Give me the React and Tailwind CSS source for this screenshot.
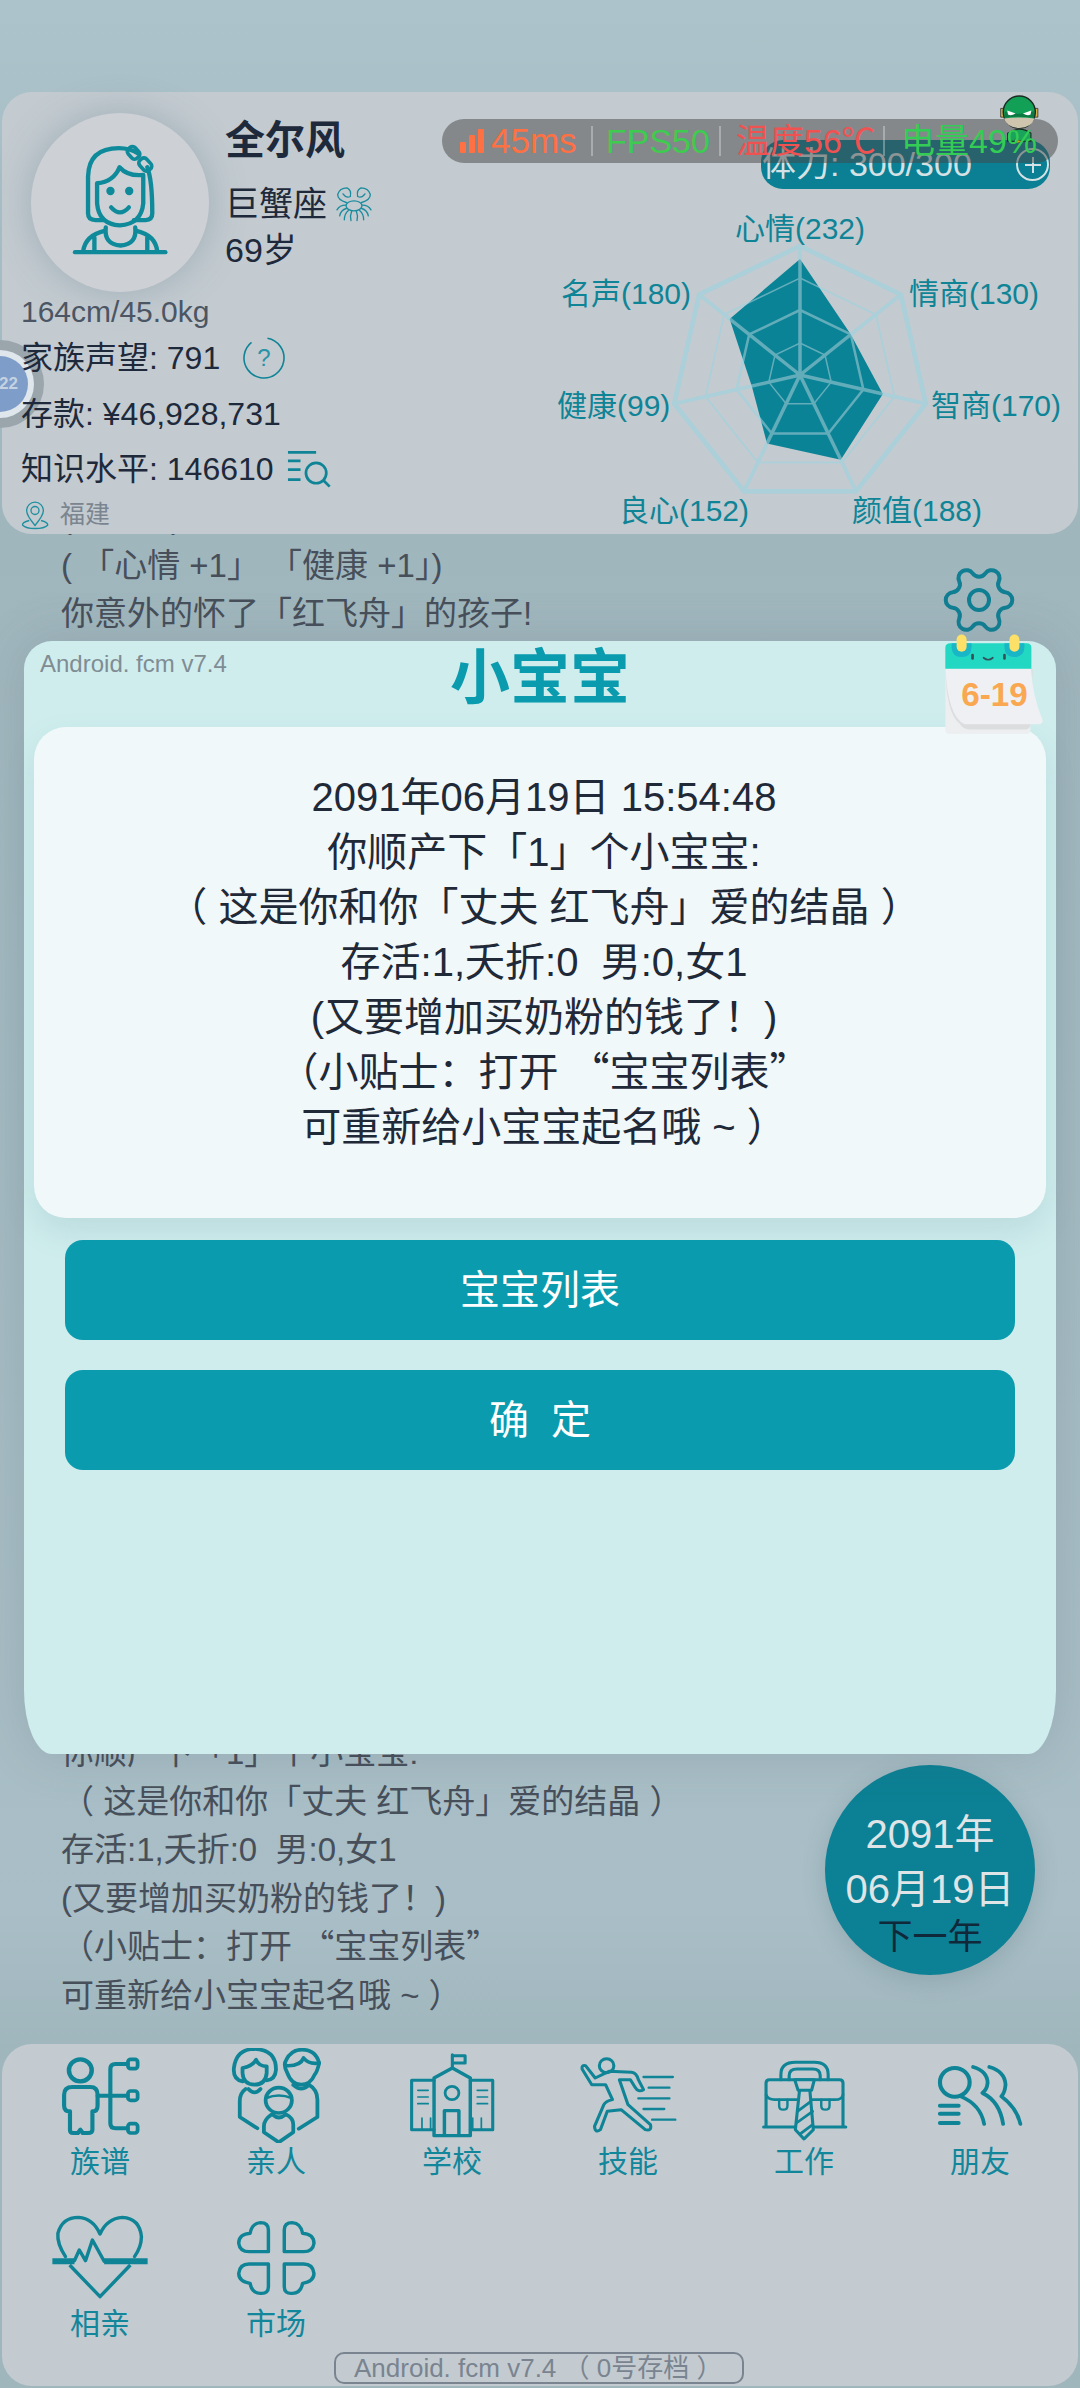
import { Settings } from 'lucide-react';

const TEAL = '#0f8496';
const PANEL = '#c3cbd0';

// 雷达图: 顺时针, 从「心情」开始
const STATS = [232, 130, 170, 188, 152, 99, 180];
const CX = 800;
const CY = 375;

function ring(r) {
  return STATS.map((_, i) => {
    const a = (i * 2 * Math.PI) / 7;
    return `${CX + r * Math.sin(a)},${CY - r * Math.cos(a)}`;
  }).join(' ');
}

function valuePoints() {
  return STATS.map((v, i) => {
    const a = (i * 2 * Math.PI) / 7;
    return `${CX + (v / 2) * Math.sin(a)},${CY - (v / 2) * Math.cos(a)}`;
  }).join(' ');
}

function RadarGrid({ opacity }) {
  const grid = '#abd0da';
  return (
    <g fill="none" stroke={grid} opacity={opacity}>
      <polygon points={ring(129)} strokeWidth="4.5" />
      <polygon points={ring(97)} strokeWidth="1.5" />
      <polygon points={ring(65)} strokeWidth="2.5" />
      <polygon points={ring(32)} strokeWidth="1.5" />
      {STATS.map((_, i) => {
        const a = (i * 2 * Math.PI) / 7;
        return <line key={i} x1={CX} y1={CY} x2={CX + 129 * Math.sin(a)} y2={CY - 129 * Math.cos(a)} strokeWidth="3.5" />;
      })}
    </g>
  );
}

function Radar() {
  const labels = [
    ['心情(232)', 735, 228],
    ['情商(130)', 909, 293],
    ['智商(170)', 931, 405],
    ['颜值(188)', 852, 510],
    ['良心(152)', 619, 510],
    ['健康(99)', 557, 405],
    ['名声(180)', 561, 293],
  ];
  return (
    <svg viewBox="540 195 538 339" className="block w-[538px] h-[339px]">
      <RadarGrid opacity={1} />
      <polygon points={valuePoints()} fill="#0b8396" />
      <RadarGrid opacity={0.55} />
      {labels.map(([t, x, y]) => (
        <text key={t} x={x} y={y + 11} fontSize="30" fill={TEAL}>{t}</text>
      ))}
    </svg>
  );
}

function Avatar() {
  return (
    <svg viewBox="90 100 517 535" className="w-[178px] h-[179px]" fill="none" stroke="#0f8a9a" strokeWidth="13" strokeLinecap="round" strokeLinejoin="round">
      <path d="M300 420H275Q253 420 253 400V290Q255 205 345 205Q378 205 405 222M430 262Q445 300 445 400Q445 420 425 420H390" />
      <path d="M280 310V370Q285 432 348 436Q412 432 418 370V285Q372 290 347 262Q330 305 280 310Z" />
      <circle cx="320" cy="333" r="6" fill="#0f8a9a" />
      <circle cx="376" cy="333" r="6" fill="#0f8a9a" />
      <path d="M322 382Q348 412 375 382" />
      <rect x="370" y="205" width="38" height="28" rx="11" transform="rotate(48 389 219)" strokeWidth="11" />
      <rect x="404" y="240" width="40" height="28" rx="11" transform="rotate(48 424 254)" strokeWidth="11" />
      <path d="M306 442Q300 492 350 496Q400 492 394 442" />
      <path d="M238 514Q245 465 302 452M460 514Q455 465 398 452M272 514V472M430 514V472" />
      <path d="M214 516H484" strokeWidth="13" />
    </svg>
  );
}

function Crab() {
  return (
    <svg viewBox="980 315 114 110" className="w-[38px] h-[37px]" fill="none" stroke="#1a8c9d" strokeWidth="4" strokeLinecap="round">
      <ellipse cx="1037" cy="374" rx="24" ry="15" />
      <path d="M1014 364Q988 356 988 340Q994 320 1016 320Q1030 326 1026 346Q1014 352 1004 338" />
      <path d="M1060 364Q1086 356 1086 340Q1080 320 1058 320Q1044 326 1048 346Q1060 352 1070 338" />
      <path d="M1012 372Q994 372 986 386M1014 382Q998 386 994 404M1020 388Q1008 398 1008 416M1030 390Q1024 404 1028 418" />
      <path d="M1062 372Q1080 372 1088 386M1060 382Q1076 386 1080 404M1054 388Q1066 398 1066 416M1044 390Q1050 404 1046 418" />
    </svg>
  );
}

function QuestionRing() {
  return (
    <svg viewBox="0 0 44 44" className="w-[44px] h-[44px]">
      <circle cx="22" cy="22" r="20" fill="none" stroke={TEAL} strokeWidth="1.6" strokeDasharray="108 18" transform="rotate(-80 22 22)" />
      <text x="22" y="30" textAnchor="middle" fontSize="24" fill="#2a93a5">?</text>
    </svg>
  );
}

function SearchList() {
  return (
    <svg viewBox="830 1108 134 112" className="w-[46px] h-[38px]" fill="none" stroke={TEAL} strokeWidth="8">
      <path d="M835 1115H918M835 1140H872M835 1166H872M835 1195H872" />
      <circle cx="918" cy="1176" r="30" />
      <path d="M940 1198L958 1216" />
    </svg>
  );
}

function Pin() {
  return (
    <svg viewBox="60 1260 84 86" className="w-[28px] h-[29px]" fill="none" stroke="#1f8fa0" strokeWidth="4">
      <path d="M102 1333Q76 1302 77 1288A25 25 0 0 1 127 1288Q128 1302 102 1333Z" />
      <circle cx="102" cy="1288" r="12" />
      <path d="M85 1318Q62 1324 65 1332Q75 1342 102 1342Q130 1342 140 1332Q142 1324 120 1318" />
    </svg>
  );
}

function Hero() {
  return (
    <svg viewBox="120 35 120 140" className="w-[44px] h-[51px]">
      <path d="M127 80h12v24h-12zM217 80h12v24h-12z" fill="#d9b24c" stroke="#222" strokeWidth="2" />
      <path d="M146 148Q178 126 210 148V170H146Z" fill="#1aa35a" stroke="#1b2a22" strokeWidth="3" />
      <circle cx="178" cy="90" r="44" fill="#12a056" stroke="#1b2a22" strokeWidth="4" />
      <path d="M136 108Q178 102 220 108Q212 133 178 134Q144 133 136 108Z" fill="#cfc4ae" />
      <path d="M138 88Q178 102 218 88L219 106Q178 100 137 106Z" fill="#0c7a42" />
      <path d="M145 86L168 94Q155 102 147 97ZM211 86L188 94Q201 102 209 97Z" fill="#fff" />
      <path d="M166 164l18 6-16 8z" fill="#e8a020" stroke="#222" strokeWidth="1" />
    </svg>
  );
}

function PerfBar() {
  return (
    <div className="absolute left-[440px] top-[27px] w-[616px] h-[44px] rounded-full bg-[rgba(70,70,70,0.5)] flex items-center pl-[18px] text-[34px] whitespace-nowrap">
      <div className="absolute left-[556px] top-[-27px]"><Hero /></div>
      <svg viewBox="0 0 25 24" className="relative w-[25px] h-[24px] mr-[6px]" fill="#ff7043">
        <rect x="0" y="13" width="6" height="11" rx="1" />
        <rect x="9" y="6" width="6" height="18" rx="1" />
        <rect x="18" y="0" width="6" height="24" rx="1" />
      </svg>
      <span className="relative w-[88px] text-[#ff7043] text-[35px]">45ms</span>
      <span className="relative ml-[12px] mr-[13px] w-[2px] h-[30px] bg-white/30" />
      <span className="relative w-[100px] text-[#3ecb50]">FPS50</span>
      <span className="relative ml-[13px] mr-[15px] w-[2px] h-[30px] bg-white/30" />
      <span className="relative w-[134px] text-[#f05252]">温度56℃</span>
      <span className="relative ml-[13px] mr-[16px] w-[2px] h-[30px] bg-white/30" />
      <span className="relative text-[#33cc55]">电量49%</span>
    </div>
  );
}

function TopPanel() {
  return (
    <div className="relative z-10 mt-[92px] mx-[2px] h-[442px] rounded-[30px] bg-[#c3cbd0] flex">
      {/* 悬浮球 */}
      <div className="absolute left-[-46px] top-[248px] w-[88px] h-[88px] rounded-full bg-[#9aa6ac] flex items-center justify-center">
        <div className="w-[68px] h-[68px] rounded-full bg-[#dfe7ec] flex items-center justify-center">
          <div className="w-[56px] h-[56px] rounded-full bg-[#7f9dc9] flex items-center justify-end pr-[10px] text-[17px] font-bold text-[#c4d2e2]">22</div>
        </div>
      </div>

      <div className="relative w-[538px] flex flex-col text-[32px] text-[#1e293b]">
        <div className="flex pl-[29px] pt-[21px]">
          <div className="w-[178px] h-[179px] rounded-full bg-[#cdd1d6] shadow-[0_0_36px_rgba(90,115,135,0.35)]">
            <Avatar />
          </div>
          <div className="ml-[16px]">
            <div className="h-[54px] flex items-center text-[40px] font-bold">全尔风</div>
            <div className="mt-[15px] h-[44px] flex items-center text-[34px]">巨蟹座<span className="ml-[8px]"><Crab /></span></div>
            <div className="mt-[2px] h-[44px] flex items-center text-[34px]">69岁</div>
          </div>
        </div>
        <div className="pl-[19px]">
          <div className="h-[38px] flex items-center text-[30px] text-[#4b5563]">164cm/45.0kg</div>
          <div className="h-[56px] flex items-center">家族声望: 791<span className="ml-[22px]"><QuestionRing /></span></div>
          <div className="h-[55px] flex items-center">存款: ¥46,928,731</div>
          <div className="h-[55px] flex items-center">知识水平: 146610<span className="ml-[12px]"><SearchList /></span></div>
          <div className="h-[38px] flex items-center text-[25px] text-[#7b8590]"><Pin /><span className="ml-[11px]">福建</span></div>
        </div>
      </div>

      <div className="w-[538px] flex flex-col items-end">
        <div className="mt-[48px] mr-[28px] w-[289px] h-[49px] rounded-[22px] bg-[#0b7f93] flex items-center justify-between pl-[1px] pr-[1px] text-[34px] text-[#d5e2e5]">
          <span>体力: 300/300</span>
          <span className="w-[33px] h-[33px] rounded-full border-2 border-[#d5e2e5] flex items-center justify-center">
            <svg viewBox="0 0 20 20" className="w-[20px] h-[20px]" stroke="#d5e2e5" strokeWidth="2"><path d="M10 2V18M2 10H18" /></svg>
          </span>
        </div>
        <div className="mt-[6px]"><Radar /></div>
      </div>

      <PerfBar />
    </div>
  );
}

function Calendar() {
  return (
    <svg viewBox="190 275 310 315" className="w-[103px] h-[105px]">
      <path d="M197 385V570Q197 581 210 581H440Q453 581 453 570V385Z" fill="#eceef0" />
      <path d="M197 385Q200 520 240 550Q250 568 270 568H440Q453 565 453 553L460 385Z" fill="#dcdddf" />
      <path d="M197 385H455Q460 470 490 540Q490 552 478 552H255Q205 530 197 385Z" fill="#eef0f4" />
      <path d="M197 385V322Q197 308 212 308H442Q456 308 456 322V385Z" fill="#22d8c2" />
      <path d="M216 308V322Q218 350 246 350Q274 350 276 322V308Z" fill="#19b6c8" />
      <path d="M375 308V322Q377 350 405 350Q433 350 435 322V308H375Z" fill="#19b6c8" />
      <rect x="231" y="282" width="30" height="52" rx="15" fill="#fde068" />
      <rect x="390" y="282" width="30" height="52" rx="15" fill="#fde068" />
      <rect x="275" y="340" width="8" height="18" rx="4" fill="#35505a" />
      <rect x="371" y="340" width="8" height="18" rx="4" fill="#35505a" />
      <path d="M312 352Q326 364 340 352" fill="none" stroke="#35505a" strokeWidth="5" strokeLinecap="round" />
      <text x="345" y="498" textAnchor="middle" fontSize="100" fontWeight="700" fill="#f9a851">6-19</text>
    </svg>
  );
}

// 弯引号要用中文字形(全角), Liberation 里的太窄
function Quoted({ children }) {
  return (
    <>
      <span className="leading-none font-['Noto_Sans_CJK_SC']">“</span>
      {children}
      <span className="leading-none font-['Noto_Sans_CJK_SC']">”</span>
    </>
  );
}

function Dialog() {
  return (
    <div className="absolute z-30 left-[24px] top-[641px] w-[1032px] h-[1113px] bg-[#cfeded] rounded-t-[28px] rounded-b-[28px_64px] shadow-[0_0_50px_rgba(70,90,100,0.18)] flex flex-col">
      <div className="relative h-[86px] pb-[10px] flex items-center justify-center">
        <span className="absolute left-[16px] top-[5px] text-[24px] text-[#7f8c94]">Android. fcm v7.4</span>
        <span className="text-[60px] font-bold text-[#0a9bae]">小宝宝</span>
      </div>
      <div className="mx-[10px] h-[491px] pt-[43px] pl-[8px] rounded-[32px] bg-[#f0f8fa] shadow-[0_14px_30px_rgba(90,130,140,0.16)] text-center text-[40px] leading-[55px] text-[#1f2937] whitespace-pre">
        <div>2091年06月19日 15:54:48</div>
        <div>你顺产下「1」个小宝宝:</div>
        <div>（ 这是你和你「丈夫 红飞舟」爱的结晶 ）</div>
        <div>存活:1,夭折:0  男:0,女1</div>
        <div>(又要增加买奶粉的钱了！)</div>
        <div>（小贴士：打开 <Quoted>宝宝列表</Quoted></div>
        <div>可重新给小宝宝起名哦 ~ ）</div>
      </div>
      <button className="mx-[41px] mt-[22px] h-[100px] rounded-[18px] bg-[#0a9bae] text-[40px] text-white">宝宝列表</button>
      <button className="mx-[41px] mt-[30px] h-[100px] rounded-[18px] bg-[#0a9bae] text-[40px] text-white whitespace-pre">确  定</button>
    </div>
  );
}

function Log() {
  return (
    <div className="relative flex-1 -mt-[41px] pl-[61px] pb-[24px] flex flex-col justify-between text-[33px] leading-[48.5px] text-[#474f5a] whitespace-pre">
      <div>
        <div>(「心情」)</div>
        <div>( 「心情 +1」 「健康 +1」)</div>
        <div>你意外的怀了「红飞舟」的孩子!</div>
      </div>
      <div>
        <div>你顺产下「1」个小宝宝:</div>
        <div>（ 这是你和你「丈夫 红飞舟」爱的结晶 ）</div>
        <div>存活:1,夭折:0  男:0,女1</div>
        <div>(又要增加买奶粉的钱了！)</div>
        <div>（小贴士：打开 <Quoted>宝宝列表</Quoted></div>
        <div>可重新给小宝宝起名哦 ~ ）</div>
      </div>

      <div className="absolute left-[825px] bottom-[69px] w-[210px] h-[210px] rounded-full bg-[#0c8094] shadow-[0_6px_24px_rgba(60,90,100,0.2)] flex flex-col items-center pt-[43px] leading-[52px]">
        <span className="text-[40px] text-[#dfe4e7]">2091年</span>
        <span className="text-[40px] text-[#dfe4e7] mt-[3px]">06月19日</span>
        <span className="text-[35px] text-[#10293a] -mt-[4px]">下一年</span>
      </div>
    </div>
  );
}

/* 底部菜单图标, 路径坐标直接取自放大后的截图 */
function MenuIcon({ x, row, children }) {
  const vy = row === 0 ? 55 : 540;
  return (
    <svg viewBox={`${x - 255} ${vy} 510 285`} preserveAspectRatio="none" className="w-[176px] h-[95px]" fill="none" stroke={TEAL} strokeWidth="11" strokeLinecap="round" strokeLinejoin="round">
      {children}
    </svg>
  );
}

const MENU = [
  {
    label: '族谱',
    x: 290,
    row: 0,
    icon: (
      <>
        <circle cx="233" cy="122" r="33" strokeWidth="13" />
        <path d="M210 172H262Q283 172 283 195V228Q283 245 268 245V300Q268 310 255 310H240L233 300L226 310H212Q203 310 203 300V245Q186 245 186 228V195Q186 172 210 172Z" strokeWidth="12" />
        <path d="M283 198H370M370 103H335Q320 103 320 118V281Q320 296 335 296H370" strokeWidth="12" />
        <rect x="371" y="89" width="28" height="28" rx="8" strokeWidth="11" />
        <rect x="371" y="184" width="28" height="28" rx="8" strokeWidth="11" />
        <rect x="371" y="282" width="28" height="28" rx="8" strokeWidth="11" />
      </>
    ),
  },
  {
    label: '亲人',
    x: 800,
    row: 0,
    icon: (
      <>
        <path d="M703 155Q675 150 678 115Q685 58 738 58Q800 60 800 120Q798 150 773 152" />
        <path d="M703 115V130Q705 165 738 165Q770 165 773 130V110Q750 110 742 90Q735 108 703 115Z" />
        <path d="M832 128Q820 105 830 90Q845 60 875 60Q915 60 925 100Q920 125 912 135Q900 165 873 165Q845 165 832 128Z" />
        <path d="M830 108Q870 110 880 85Q895 105 925 100" />
        <path d="M720 178Q738 198 755 178M850 166Q873 188 895 166" />
        <path d="M712 178Q695 190 695 215V262L746 296M895 165Q920 180 920 210V262L866 297" />
        <circle cx="808" cy="212" r="38" />
        <path d="M772 205Q808 190 845 205" strokeWidth="8" />
        <path d="M786 255Q765 270 765 290V308L808 338L850 308V285Q850 265 830 255M790 255Q808 272 828 255" />
      </>
    ),
  },
  {
    label: '学校',
    x: 1312,
    row: 0,
    icon: (
      <>
        <path d="M1313 115V75M1313 78H1350V100H1313" strokeWidth="9" />
        <path d="M1260 318V145L1313 115L1365 145V318Z" strokeWidth="10" />
        <circle cx="1312" cy="190" r="20" strokeWidth="8" />
        <path d="M1290 316V243H1332V316" strokeWidth="10" />
        <path d="M1260 152H1195V300H1260M1365 152H1430V300H1365" strokeWidth="9" />
        <path d="M1213 182H1243M1213 202H1243M1213 222H1243M1385 182H1415M1385 202H1415M1385 222H1415M1225 265V300M1250 265V300M1372 265V300M1397 265V300" strokeWidth="5" />
      </>
    ),
  },
  {
    label: '技能',
    x: 255,
    row: 0,
    icon: (
      <>
        <circle cx="193" cy="108" r="21" strokeWidth="9" />
        <path d="M122 118Q120 105 132 108L160 145L200 125L265 128Q280 130 285 150L300 180Q285 190 275 172L262 150H230L255 225L320 285Q325 305 305 300L235 240L195 245L175 300Q160 312 158 290L185 225Q190 215 210 210L190 165H150Z" strokeWidth="9" />
        <path d="M300 142H385M315 174H375M285 206H375M300 238H360M325 270H392" strokeWidth="7" />
      </>
    ),
  },
  {
    label: '工作',
    x: 765,
    row: 0,
    icon: (
      <>
        <path d="M655 290V160Q655 150 665 150H868Q878 150 878 160V290" strokeWidth="9" />
        <path d="M648 292H886" strokeWidth="9" />
        <path d="M698 150V135Q698 98 740 98H795Q835 98 835 135V150M722 150V138Q722 118 745 118H790Q812 118 812 138V150" strokeWidth="9" />
        <path d="M655 195Q660 210 680 210H745M790 210H855Q875 210 878 195" strokeWidth="8" />
        <path d="M693 210V228Q693 240 705 240Q717 240 717 228V210M815 210V228Q815 240 827 240Q839 240 839 228V210" strokeWidth="7" />
        <path d="M738 150H795L787 182H748ZM752 182L740 300L765 328L792 300L782 182Z" fill={PANEL} strokeWidth="9" />
        <path d="M746 245L785 215M743 280L790 245M755 312L790 285" strokeWidth="8" />
      </>
    ),
  },
  {
    label: '朋友',
    x: 1278,
    row: 0,
    icon: (
      <>
        <circle cx="1205" cy="158" r="43" strokeWidth="12" />
        <path d="M1222 200Q1280 225 1290 283M1258 112Q1300 125 1300 160Q1298 180 1285 190Q1335 215 1345 283M1305 112Q1350 125 1352 165Q1350 190 1340 200Q1385 235 1395 283" />
        <path d="M1162 228H1216M1162 252H1216M1162 280H1216" strokeWidth="12" />
      </>
    ),
  },
  {
    label: '相亲',
    x: 290,
    row: 1,
    icon: (
      <>
        <path d="M190 680Q165 640 168 610Q180 562 228 562Q270 565 290 612Q310 565 355 562Q405 565 410 620Q410 650 390 680" strokeWidth="10" />
        <path d="M202 705L290 800L378 705" strokeWidth="10" strokeLinecap="butt" />
        <path d="M152 694H216M302 694H428" strokeWidth="18" strokeLinecap="butt" />
        <path d="M216 692L230 660L248 692L268 630L302 694" strokeWidth="10" />
      </>
    ),
  },
  {
    label: '市场',
    x: 800,
    row: 1,
    icon: (
      <>
        <path d="M778 665V600Q778 578 755 578Q730 580 725 610Q692 612 692 640Q695 665 722 665Z" strokeWidth="10" />
        <path d="M824 665V600Q824 578 847 578Q872 580 877 610Q910 612 910 640Q907 665 880 665Z" strokeWidth="10" />
        <path d="M778 702V770Q778 792 755 790Q730 790 725 760Q692 755 692 730Q695 702 722 702Z" strokeWidth="10" />
        <path d="M824 702V770Q824 792 847 790Q872 790 877 760Q910 755 910 730Q907 702 880 702Z" strokeWidth="10" />
      </>
    ),
  },
];

function BottomPanel() {
  return (
    <div className="relative z-10 mb-[2px] mx-[2px] h-[342px] rounded-[30px] bg-[#c3cbd0]">
      <div className="grid grid-cols-6 pt-[4px] pl-[10px] w-[1066px]">
        {MENU.map((m) => (
          <div key={m.label} className="h-[162px] flex flex-col items-center">
            <MenuIcon x={m.x} row={m.row}>{m.icon}</MenuIcon>
            <span className="h-[36px] flex items-center text-[30px] text-[#12869a]">{m.label}</span>
          </div>
        ))}
      </div>
      <div className="absolute left-[332px] bottom-[2px] w-[410px] h-[32px] rounded-[10px] border-2 border-[#7a8490] flex items-center pl-[18px] text-[26px] text-[#7a8490] whitespace-pre">
        Android. fcm v7.4 （ 0号存档 ）
      </div>
    </div>
  );
}

export default function App() {
  return (
    <div lang="zh-CN" className="relative w-[1080px] h-[2388px] overflow-hidden flex flex-col font-['Liberation_Sans','Noto_Sans_CJK_SC',sans-serif] bg-[linear-gradient(180deg,#adc3cb_0%,#a0b6bd_22%,#a6bcc4_60%,#a9bec6_80%,#a0b6bd_86%)]">
      <TopPanel />
      <Log />
      <BottomPanel />
      <Settings className="absolute left-[939px] top-[560px] w-[80px] h-[80px] rotate-90 text-[#107f93]" strokeWidth={1.2} />
      <Dialog />
      <div className="absolute z-40 left-[943px] top-[632px]"><Calendar /></div>
    </div>
  );
}
